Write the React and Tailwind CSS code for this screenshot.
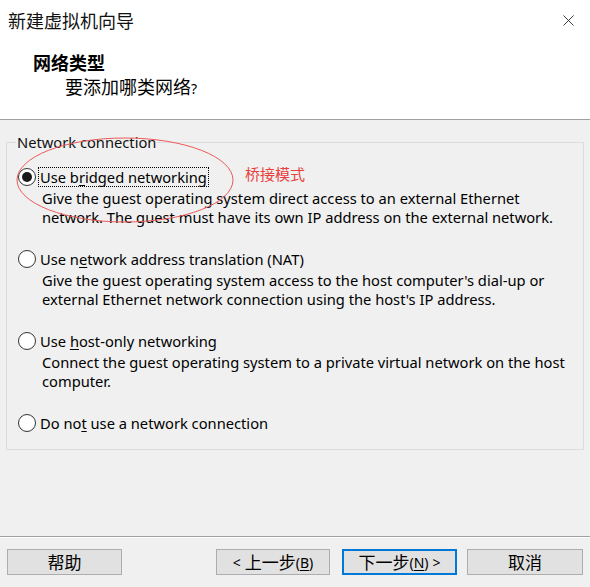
import { X } from "lucide-react";

const latin = { fontFamily: '"Noto Sans", "Noto Sans CJK SC", sans-serif' };
const cjk = { fontFamily: '"Noto Sans CJK SC", "Noto Sans", sans-serif' };

const Radio = ({ checked }) => (
  <span className="w-[18px] h-[18px] shrink-0 rounded-full border border-[#333] bg-white flex items-center justify-center">
    {checked && <span className="w-[10px] h-[10px] rounded-full bg-[#1a1a1a]" />}
  </span>
);

const Option = ({ checked, label, desc }) => (
  <div className="flex flex-col">
    <div className="flex items-center h-[20px]">
      <Radio checked={checked} />
      <span
        className={`ml-[2px] px-[1px] leading-[18px] border ${
          checked ? "border-dotted border-black" : "border-transparent"
        }`}
      >
        {label}
      </span>
    </div>
    {desc && (
      <div className="pl-[24px] mt-[2px] leading-[19px]">
        {desc.map((line) => (
          <div key={line}>{line}</div>
        ))}
      </div>
    )}
  </div>
);

const Button = ({ children, primary, className = "" }) => (
  <button
    className={`h-[26px] bg-[#e1e1e1] text-black flex items-center justify-center ${
      primary ? "border-2 border-[#0078d7]" : "border border-[#adadad]"
    } ${className}`}
  >
    {children}
  </button>
);

const Key = ({ children }) => <span className="underline underline-offset-2">{children}</span>;

export default function App() {
  return (
    <div className="relative w-[590px] h-[587px] bg-[#f0f0f0] flex flex-col text-[14.7px] text-black" style={latin}>
      <div className="h-[120px] bg-white border-b border-[#a0a0a0] relative shrink-0" style={cjk}>
        <div className="pl-[8px] pt-[8px] text-[18px] leading-[24px] text-[#111]">新建虚拟机向导</div>
        <X className="absolute right-[12px] top-[11px] text-[#222]" size={19} strokeWidth={1.1} />
        <div className="pl-[33px] mt-[18px] text-[18px] font-bold leading-[24px]">网络类型</div>
        <div className="pl-[65px] text-[18px] leading-[24px]">
          要添加哪类网络<span className="text-[14px]" style={latin}>?</span>
        </div>
      </div>

      <div className="flex-1 px-[6px] pt-[12px]">
        <fieldset className="border border-[#dcdcdc] pl-[11px] pt-[15px] pb-[16px] flex flex-col gap-[22px]">
          <legend className="-ml-[2px] px-[1px] leading-[20px] text-[#111]">Network connection</legend>
          <Option
            checked
            label={<>Use b<Key>r</Key>idged networking</>}
            desc={[
              "Give the guest operating system direct access to an external Ethernet",
              "network. The guest must have its own IP address on the external network.",
            ]}
          />
          <Option
            label={<>Use n<Key>e</Key>twork address translation (NAT)</>}
            desc={[
              "Give the guest operating system access to the host computer's dial-up or",
              "external Ethernet network connection using the host's IP address.",
            ]}
          />
          <Option
            label={<>Use <Key>h</Key>ost-only networking</>}
            desc={[
              "Connect the guest operating system to a private virtual network on the host",
              "computer.",
            ]}
          />
          <Option label={<>Do no<Key>t</Key> use a network connection</>} />
        </fieldset>
      </div>

      <div className="h-px bg-[#a0a0a0] shrink-0" />
      <div className="h-px bg-white shrink-0" />
      <div className="h-[49px] shrink-0 flex items-start pt-[11px] px-[7px] text-[17px]" style={cjk}>
        <Button className="w-[115px]">帮助</Button>
        <div className="ml-auto flex">
          <Button className="w-[114px]">
            <span className="text-[14px] mr-[4px]" style={latin}>&lt;</span>上一步
            <span className="text-[14px]" style={latin}>(<Key>B</Key>)</span>
          </Button>
          <Button primary className="w-[115px] ml-[12px]">
            下一步<span className="text-[14px]" style={latin}>(<Key>N</Key>)</span>
            <span className="text-[14px] ml-[4px]" style={latin}>&gt;</span>
          </Button>
          <Button className="w-[116px] ml-[10px]">取消</Button>
        </div>
      </div>

      <svg className="absolute left-0 top-0 pointer-events-none" width="590" height="587">
        <ellipse cx="125" cy="180" rx="108" ry="42" fill="none" stroke="#ec5a5a" strokeWidth="1" />
      </svg>
      <div className="absolute left-[245px] top-[164px] text-[15px] leading-[20px] text-[#e8413c]" style={cjk}>
        桥接模式
      </div>
    </div>
  );
}
